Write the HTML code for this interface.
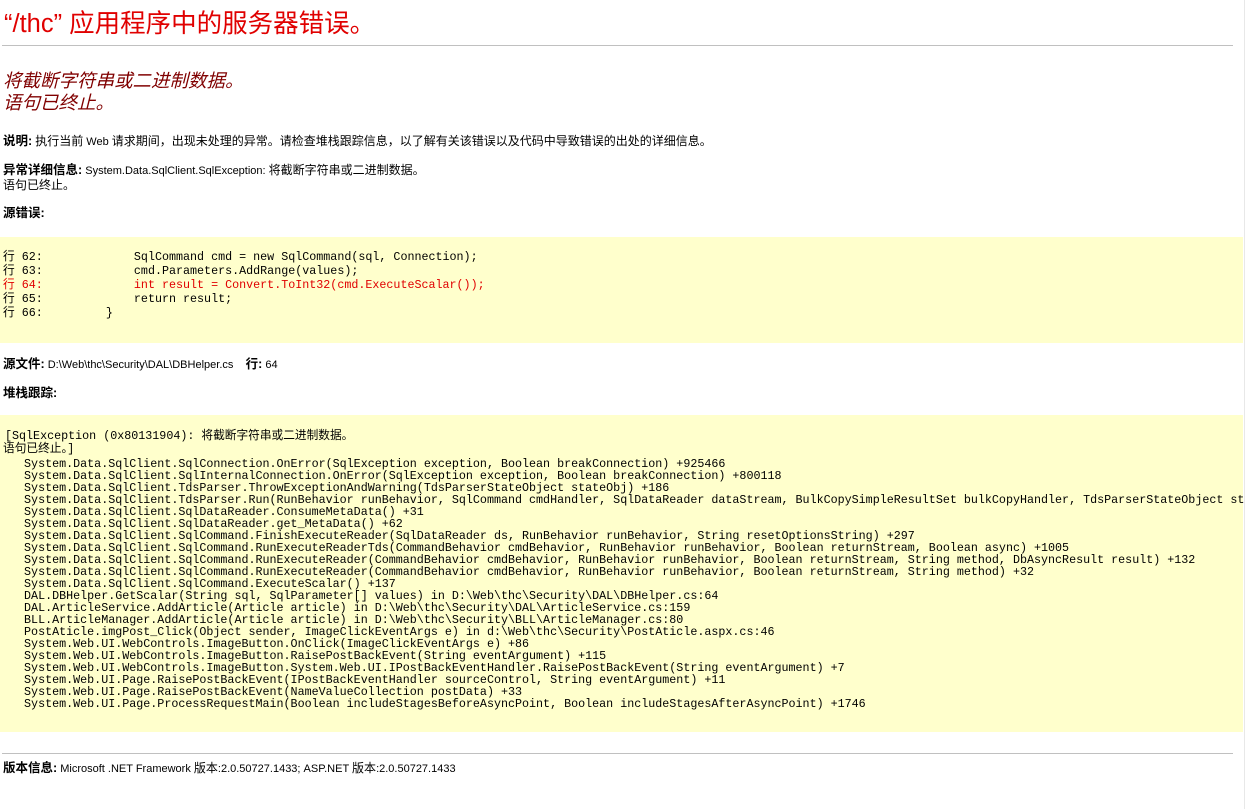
<!DOCTYPE html>
<html><head><meta charset="utf-8"><style>
body{margin:0;background:#fff;width:1246px;height:809px;overflow:hidden;position:relative;font-family:"Liberation Sans","Noto Sans CJK SC",sans-serif;font-size:11px;color:#000}
.a{position:absolute;white-space:pre;left:3px}
.m{font-family:"Liberation Mono","Noto Sans CJK SC",monospace;font-size:11.7px}
b{font-weight:bold;font-size:12.5px}
.c{font-size:12px}
.y{position:absolute;left:0;width:1243px;background:#ffffcc}
.hr{position:absolute;left:2px;width:1231px;height:1px;background:#c0c0c0}
</style></head><body>
<div class="a" style="top:8px;left:4px;font-size:25.5px;line-height:32px;color:#e00000">“/thc” 应用程序中的服务器错误。</div>
<div class="hr" style="top:45px"></div>
<div class="a" style="top:70px;font-size:18.5px;line-height:22px;color:#800000;font-style:italic">将截断字符串或二进制数据。
语句已终止。</div>
<div class="a" style="top:134px;line-height:14px"><b>说明:</b> <span class="c">执行当前</span> Web <span class="c">请求期间，出现未处理的异常。请检查堆栈跟踪信息，以了解有关该错误以及代码中导致错误的出处的详细信息。</span></div>
<div class="a" style="top:163px;line-height:14px"><b>异常详细信息:</b> System.Data.SqlClient.SqlException: <span class="c">将截断字符串或二进制数据。</span>
<span class="c">语句已终止。</span></div>
<div class="a" style="top:206px;line-height:14px"><b>源错误:</b></div>
<div class="y" style="top:237px;height:106px"></div>
<div class="a m" style="top:250px;line-height:14px">行 62:             SqlCommand cmd = new SqlCommand(sql, Connection);
行 63:             cmd.Parameters.AddRange(values);
<span style="color:#e00000">行 64:             int result = Convert.ToInt32(cmd.ExecuteScalar());</span>
行 65:             return result;
行 66:         }</div>
<div class="a" style="top:357px;line-height:14px"><b>源文件:</b> D:\Web\thc\Security\DAL\DBHelper.cs    <b>行:</b> 64</div>
<div class="a" style="top:386px;line-height:14px"><b>堆栈跟踪:</b></div>
<div class="y" style="top:415px;height:317px"></div>
<div class="a m" style="top:430px;left:5px;line-height:13px">[SqlException (0x80131904): 将截断字符串或二进制数据。</div>
<div class="a m" style="top:443px;line-height:13px">语句已终止。]</div>
<div class="a m" style="top:458px;line-height:12px">   System.Data.SqlClient.SqlConnection.OnError(SqlException exception, Boolean breakConnection) +925466
   System.Data.SqlClient.SqlInternalConnection.OnError(SqlException exception, Boolean breakConnection) +800118
   System.Data.SqlClient.TdsParser.ThrowExceptionAndWarning(TdsParserStateObject stateObj) +186
   System.Data.SqlClient.TdsParser.Run(RunBehavior runBehavior, SqlCommand cmdHandler, SqlDataReader dataStream, BulkCopySimpleResultSet bulkCopyHandler, TdsParserStateObject st
   System.Data.SqlClient.SqlDataReader.ConsumeMetaData() +31
   System.Data.SqlClient.SqlDataReader.get_MetaData() +62
   System.Data.SqlClient.SqlCommand.FinishExecuteReader(SqlDataReader ds, RunBehavior runBehavior, String resetOptionsString) +297
   System.Data.SqlClient.SqlCommand.RunExecuteReaderTds(CommandBehavior cmdBehavior, RunBehavior runBehavior, Boolean returnStream, Boolean async) +1005
   System.Data.SqlClient.SqlCommand.RunExecuteReader(CommandBehavior cmdBehavior, RunBehavior runBehavior, Boolean returnStream, String method, DbAsyncResult result) +132
   System.Data.SqlClient.SqlCommand.RunExecuteReader(CommandBehavior cmdBehavior, RunBehavior runBehavior, Boolean returnStream, String method) +32
   System.Data.SqlClient.SqlCommand.ExecuteScalar() +137
   DAL.DBHelper.GetScalar(String sql, SqlParameter[] values) in D:\Web\thc\Security\DAL\DBHelper.cs:64
   DAL.ArticleService.AddArticle(Article article) in D:\Web\thc\Security\DAL\ArticleService.cs:159
   BLL.ArticleManager.AddArticle(Article article) in D:\Web\thc\Security\BLL\ArticleManager.cs:80
   PostAticle.imgPost_Click(Object sender, ImageClickEventArgs e) in d:\Web\thc\Security\PostAticle.aspx.cs:46
   System.Web.UI.WebControls.ImageButton.OnClick(ImageClickEventArgs e) +86
   System.Web.UI.WebControls.ImageButton.RaisePostBackEvent(String eventArgument) +115
   System.Web.UI.WebControls.ImageButton.System.Web.UI.IPostBackEventHandler.RaisePostBackEvent(String eventArgument) +7
   System.Web.UI.Page.RaisePostBackEvent(IPostBackEventHandler sourceControl, String eventArgument) +11
   System.Web.UI.Page.RaisePostBackEvent(NameValueCollection postData) +33
   System.Web.UI.Page.ProcessRequestMain(Boolean includeStagesBeforeAsyncPoint, Boolean includeStagesAfterAsyncPoint) +1746</div>
<div style="position:absolute;left:1244px;top:0;width:1px;height:809px;background:#e8e8e8"></div>
<div class="hr" style="top:753px"></div>
<div class="a" style="top:761px;line-height:14px"><b>版本信息:</b> Microsoft .NET Framework <span class="c">版本</span>:2.0.50727.1433; ASP.NET <span class="c">版本</span>:2.0.50727.1433</div>
</body></html>
